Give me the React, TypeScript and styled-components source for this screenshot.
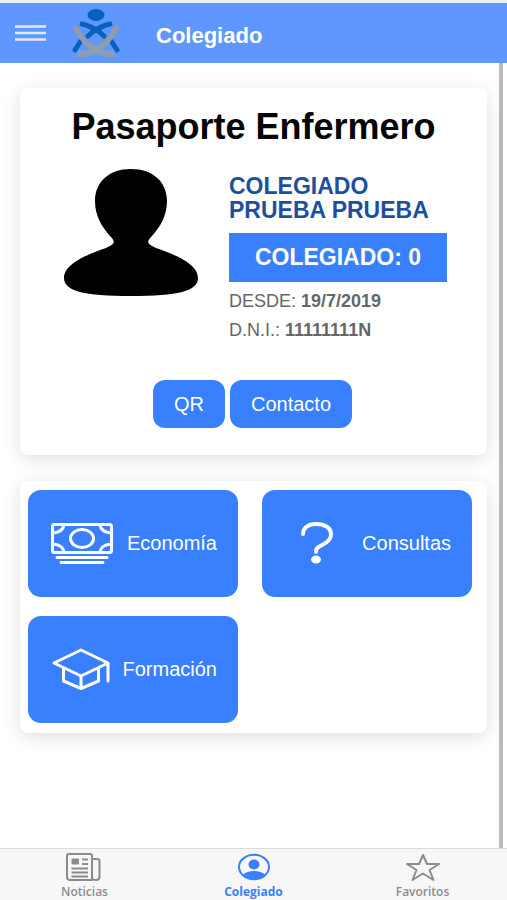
import React from "react";
import styled, { createGlobalStyle } from "styled-components";

const GlobalStyle = createGlobalStyle`
  * { box-sizing: border-box; }
  body {
    margin: 0;
    background: #fff;
    font-family: "Liberation Sans", Arial, sans-serif;
  }
  button { font-family: inherit; cursor: pointer; }
`;

const Page = styled.div`
  display: flex;
  flex-direction: column;
  min-height: 100vh;
`;

const Header = styled.header`
  display: flex;
  align-items: center;
  height: 63px;
  padding: 0 15px;
  border-top: 3px solid #eef1f6;
  background: #6097ff;
`;

const MenuButton = styled.button`
  display: flex;
  padding: 0;
  border: 0;
  background: none;
`;

const Logo = styled.svg`
  width: 48px;
  height: 50px;
  margin: 2px 36px 0 26px;
`;

const HeaderTitle = styled.h1`
  margin: 6px 0 0;
  color: #fff;
  font-size: 22px;
  line-height: 26px;
`;

const Content = styled.main`
  flex: 1;
  display: flex;
  flex-direction: column;
  gap: 26px;
  margin-right: 4px;
  padding: 25px 12px 24px 20px;
  border-right: 4px solid #bababa;
`;

const Card = styled.section`
  border-radius: 8px;
  background: #fff;
  box-shadow: 0 4px 18px rgba(0, 0, 0, 0.13);
`;

const PassportCard = styled(Card)`
  padding: 18px 16px 27px;
`;

const PassportTitle = styled.h2`
  margin: 0;
  color: #060606;
  font-size: 36px;
  line-height: 42px;
  text-align: center;
`;

const Profile = styled.div`
  display: flex;
  gap: 30px;
  margin-top: 20px;
  padding-left: 27px;
`;

const Avatar = styled.svg`
  flex: none;
  width: 136px;
  height: 128px;
`;

const Details = styled.div`
  flex: 1;
  padding: 6px 24px 0 0;
`;

const MemberName = styled.h3`
  margin: 0;
  color: #1d4f9f;
  font-size: 23px;
  line-height: 24px;
  text-transform: uppercase;
`;

const MemberNumber = styled.p`
  margin: 11px 0 5px;
  background: #3880ff;
  color: #fff;
  font-size: 23px;
  font-weight: bold;
  line-height: 49px;
  text-align: center;
`;

const Fact = styled.p`
  margin: 0;
  color: #666;
  font-size: 18px;
  line-height: 29px;
`;

const Actions = styled.div`
  display: flex;
  justify-content: center;
  gap: 5px;
  margin-top: 35px;
  padding-right: 2px;
`;

const ActionButton = styled.button`
  height: 48px;
  padding: 0 21px;
  border: 0;
  border-radius: 12px;
  background: #3880ff;
  color: #fff;
  font-size: 20px;
`;

const MenuCard = styled(Card)`
  display: grid;
  grid-template-columns: 1fr 1fr;
  gap: 19px 24px;
  padding: 9px 15px 10px 8px;
`;

const Tile = styled.button`
  display: flex;
  align-items: center;
  justify-content: space-between;
  height: 107px;
  padding: 0 21px;
  border: 0;
  border-radius: 13px;
  background: #3880ff;
  color: #fff;
  font-size: 20px;
`;

const TileIcon = styled.svg`
  flex: none;
  width: 66px;
  height: 48px;
  fill: none;
  stroke: #fff;
  stroke-width: 3;
  stroke-linecap: round;
  stroke-linejoin: round;
`;

const TabBar = styled.nav`
  display: grid;
  grid-template-columns: repeat(3, 1fr);
  height: 52px;
  border-top: 1px solid #dcdcdc;
  background: #f7f7f7;
`;

const Tab = styled.button<{ $active?: boolean }>`
  display: flex;
  flex-direction: column;
  align-items: center;
  padding: 4px 0 0;
  border: 0;
  background: none;
  color: ${(p) => (p.$active ? "#3880ff" : "#8c8c8c")};
  font-family: "Open Sans", sans-serif;
  font-size: 12px;
  font-weight: ${(p) => (p.$active ? 700 : 600)};
  line-height: 18px;
`;

const TabIcon = styled.svg`
  width: 38px;
  height: 30px;
  fill: none;
  stroke: currentColor;
  stroke-width: 2;
  stroke-linejoin: round;
`;

export default function App() {
  return (
    <Page>
      <GlobalStyle />
      <Header>
        <MenuButton aria-label="Menú">
          <svg width="31" height="18" viewBox="0 0 31 18" stroke="#dfeaff" strokeWidth="2.4">
            <path d="M0 2.5h31M0 9h31M0 15.5h31" />
          </svg>
        </MenuButton>
        <Logo viewBox="0 0 48 50" fill="none" strokeLinecap="round" aria-hidden="true">
          <ellipse cx="24" cy="6" rx="8.500" ry="6" fill="#0862bd" />
          <path d="M10 15C19 17 26 21 32 27M38 15C29 17 22 21 16 27M8 33L3 41M40 33L45 41" stroke="#0862bd" strokeWidth="5" />
          <path d="M4 19C10 33 24 44 40 45.500M44 19C38 33 24 44 8 45.500" stroke="#929da7" strokeWidth="5.500" />
        </Logo>
        <HeaderTitle>Colegiado</HeaderTitle>
      </Header>

      <Content>
        <PassportCard>
          <PassportTitle>Pasaporte Enfermero</PassportTitle>
          <Profile>
            <Avatar viewBox="0 0 136 128" role="img" aria-label="Foto del colegiado">
              <path d="M68 1C90 1 104 14 104 33C104 48 97 59 89 68C83 74 84 76 93 80C113 87 135 96 135 110C135 123 115 128 68 128C21 128 1 123 1 110C1 96 23 87 43 80C52 76 53 74 47 68C39 59 32 48 32 33C32 14 46 1 68 1Z" />
            </Avatar>
            <Details>
              <MemberName>Colegiado<br />Prueba Prueba</MemberName>
              <MemberNumber>COLEGIADO: 0</MemberNumber>
              <Fact>DESDE: <strong>19/7/2019</strong></Fact>
              <Fact>D.N.I.: <strong>11111111N</strong></Fact>
            </Details>
          </Profile>
          <Actions>
            <ActionButton>QR</ActionButton>
            <ActionButton>Contacto</ActionButton>
          </Actions>
        </PassportCard>

        <MenuCard>
          <Tile>
            <TileIcon viewBox="0 0 66 48">
              <rect x="3.5" y="4.5" width="59" height="28" rx="2" />
              <ellipse cx="33" cy="18.5" rx="11.5" ry="9" />
              <path d="M4 13Q14 12 15 5M62 13Q52 12 51 5M4 24Q14 25 15 32M62 24Q52 25 51 32M8 37.500h50M12 42.500h42" />
            </TileIcon>
            Economía
          </Tile>
          <Tile>
            <TileIcon viewBox="0 0 66 48">
              <path d="M20 14C20 8 25 4 33 4C42 4 48 8 48 14C48 20 44 22 39 25C35 27 33 28 33 32" strokeWidth="4" />
              <ellipse cx="33" cy="39.500" rx="5" ry="4" fill="#fff" stroke="none" />
            </TileIcon>
            Consultas
          </Tile>
          <Tile>
            <TileIcon viewBox="0 0 66 48">
              <path d="M5 17L32 4L59 17L32 30ZM14.500 22V35L32 42.500L49.500 35V22M32 30V42.500M59 17V35" />
            </TileIcon>
            Formación
          </Tile>
        </MenuCard>
      </Content>

      <TabBar>
        <Tab>
          <TabIcon viewBox="2 0 38 30">
            <path d="M3 2.500Q3 1 5 1H26Q28 1 28 3V27H6Q3 27 3 24Z" />
            <path d="M28 6H33Q35.500 6 35.500 8V24Q35.500 27 32 27Q28 27 28 24M18 6.500H24M18 11H24M7.500 15.500H24M7.500 19.500H24M7.500 23.500H24" />
            <rect x="8" y="6" width="6.500" height="5" fill="currentColor" strokeWidth="1" />
          </TabIcon>
          Noticias
        </Tab>
        <Tab $active aria-current="page">
          <TabIcon viewBox="0 0 38 30">
            <ellipse cx="19" cy="14" rx="15" ry="12.200" />
            <ellipse cx="19" cy="11.500" rx="5.500" ry="5" fill="currentColor" stroke="none" />
            <path d="M8 21.500Q12 18 19 18Q26 18 30 21.500Q25 26.500 19 26.500Q13 26.500 8 21.500Z" fill="currentColor" stroke="none" />
          </TabIcon>
          Colegiado
        </Tab>
        <Tab>
          <TabIcon viewBox="0 0 38 30">
            <path d="M19 2L23 11H35L25.500 17L29.500 27L19 20.500L8.500 27L12.500 17L3 11H15Z" />
          </TabIcon>
          Favoritos
        </Tab>
      </TabBar>
    </Page>
  );
}
